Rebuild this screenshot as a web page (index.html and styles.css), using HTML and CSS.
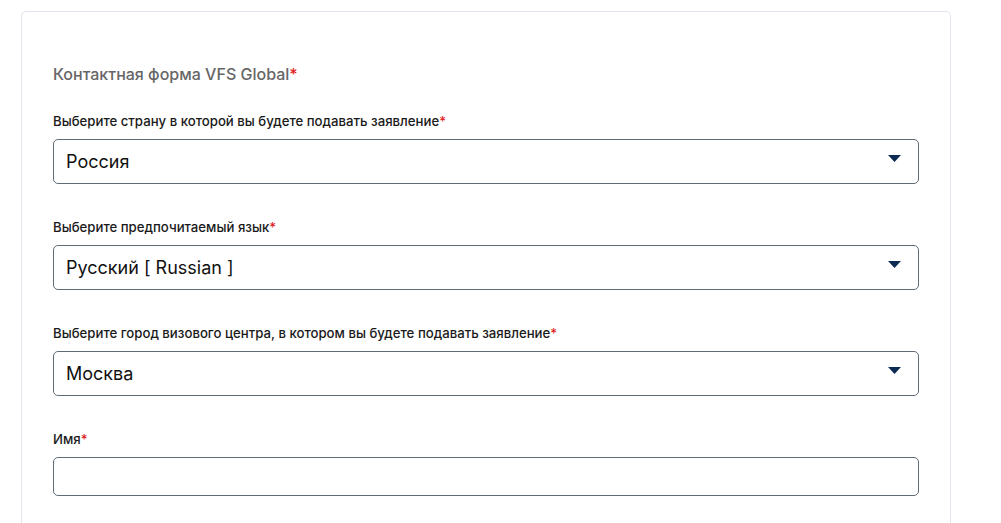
FILE: index.html
```html
<!DOCTYPE html>
<html lang="ru">

<head>
    <meta charset="UTF-8">
    <meta name="viewport" content="width=device-width, initial-scale=1.0">
    <title>Контактная форма VFS Global</title>
    <link rel="stylesheet" href="styles.css">
</head>

<body>
    <div class="page">
        <div class="form-card">
            <h3 class="form-title">Контактная форма VFS Global<span class="req">*</span></h3>
            <form id="contactForm">
                <div class="field">
                    <label for="country">Выберите страну в которой вы будете подавать заявление<span class="req">*</span></label>
                    <div class="select-wrap">
                        <select id="country" name="country">
                            <option>Россия</option>
                        </select>
                        <svg class="caret" width="13" height="7" viewBox="0 0 13 7"><path d="M0 0h13L6.5 7z" fill="#0c2a52"/></svg>
                    </div>
                </div>
                <div class="field">
                    <label for="language">Выберите предпочитаемый язык<span class="req">*</span></label>
                    <div class="select-wrap">
                        <select id="language" name="language">
                            <option>Русский [ Russian ]</option>
                        </select>
                        <svg class="caret" width="13" height="7" viewBox="0 0 13 7"><path d="M0 0h13L6.5 7z" fill="#0c2a52"/></svg>
                    </div>
                </div>
                <div class="field">
                    <label for="city">Выберите город визового центра, в котором вы будете подавать заявление<span class="req">*</span></label>
                    <div class="select-wrap">
                        <select id="city" name="city">
                            <option>Москва</option>
                        </select>
                        <svg class="caret" width="13" height="7" viewBox="0 0 13 7"><path d="M0 0h13L6.5 7z" fill="#0c2a52"/></svg>
                    </div>
                </div>
                <div class="field">
                    <label for="name">Имя<span class="req">*</span></label>
                    <input type="text" id="name" name="name">
                </div>
            </form>
        </div>
    </div>
</body>

</html>
```

FILE: styles.css
```css
body {
    margin: 0;
    padding: 0;
    background: #fff;
    font-family: Inter, "Noto Sans", sans-serif;
    color: #1a1a1a;
}

.page {
    padding: 11px 0 0 21px;
}

.form-card {
    width: 866px;
    padding: 52px 31px 60px 31px;
    border: 1px solid #e1e6ee;
    border-radius: 5px;
}

.form-title {
    margin: 0 0 28px 0;
    font-size: 16px;
    line-height: 20px;
    font-weight: 500;
    color: #666;
}

.req {
    color: #e01e1e;
}

.field {
    margin-bottom: 34px;
}

.field label {
    display: block;
    font-size: 13.2px;
    line-height: 18px;
    font-weight: 500;
    margin-bottom: 9px;
    color: #1a1a1a;
}

.select-wrap {
    position: relative;
}

.select-wrap select {
    appearance: none;
    -webkit-appearance: none;
    display: block;
    width: 100%;
    height: 45px;
    padding: 0 40px 0 12px;
    border: 1px solid #5f6b76;
    border-radius: 5px;
    background: #fff;
    font-family: inherit;
    font-size: 18px;
    color: #111;
}

.caret {
    position: absolute;
    right: 18px;
    top: 16px;
}

.field input {
    display: block;
    box-sizing: border-box;
    width: 100%;
    height: 39px;
    padding: 0 12px;
    border: 1px solid #5f6b76;
    border-radius: 5px;
    font-family: inherit;
    font-size: 16px;
}
```
